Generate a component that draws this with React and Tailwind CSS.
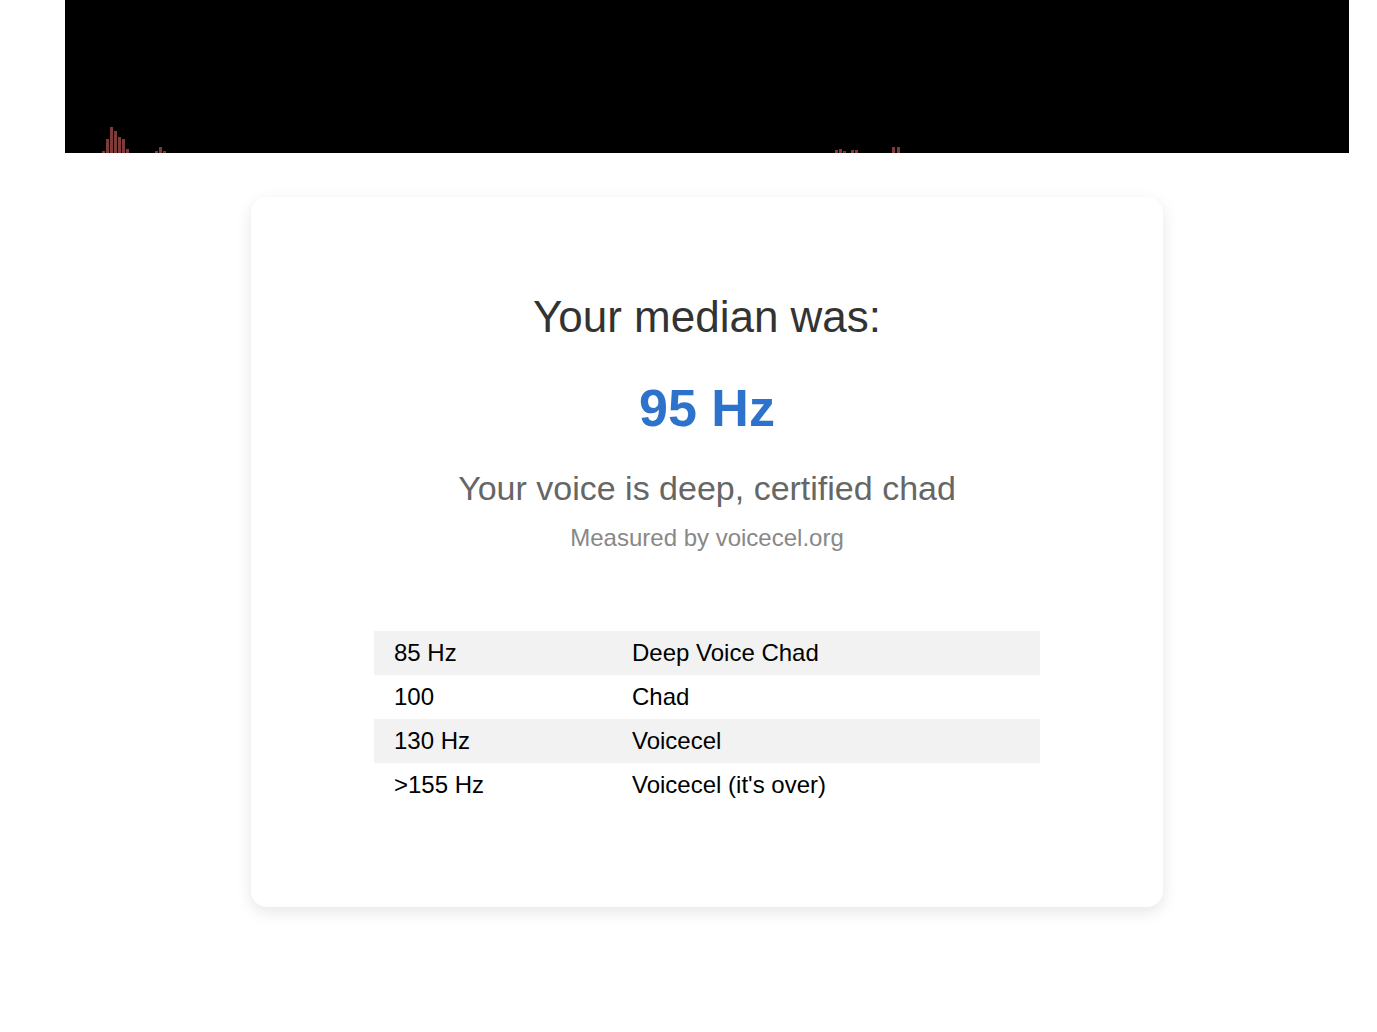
import React from "react";

const bars = [
    { x: 102, h: 2 },
    { x: 106, h: 14 },
    { x: 110, h: 26 },
    { x: 114, h: 22 },
    { x: 118, h: 16 },
    { x: 122, h: 14 },
    { x: 126, h: 4 },
    { x: 155, h: 2 },
    { x: 159, h: 6 },
    { x: 163, h: 2 },
    { x: 835, h: 3 },
    { x: 839, h: 4 },
    { x: 843, h: 2 },
    { x: 851, h: 3 },
    { x: 855, h: 3 },
    { x: 892, h: 6 },
    { x: 897, h: 6 },
];

const rows = [
    ["85 Hz", "Deep Voice Chad"],
    ["100", "Chad"],
    ["130 Hz", "Voicecel"],
    [">155 Hz", "Voicecel (it's over)"],
];

const App = () => {
    return (
        <div className="min-h-[1032px] bg-white" style={{ fontFamily: '"Liberation Sans", Arial, sans-serif' }}>
            {/* spectrum canvas */}
            <div className="ml-[65px] w-[1284px] h-[153px] bg-black">
                <svg width="1284" height="153" viewBox="0 0 1284 153">
                    {bars.map((b, i) => (
                        <rect key={i} x={b.x - 65} y={153 - b.h} width="3" height={b.h} fill="#7e3a38" />
                    ))}
                </svg>
            </div>

            <div className="ml-[251px] mt-[44px] w-[912px] rounded-2xl bg-white shadow-[0_5px_16px_rgba(0,0,0,0.1)] pt-[98px] pb-[100px] flex flex-col items-center">
                <h1 className="text-[44px] leading-none text-[#333]">Your median was:</h1>
                <div className="mt-[43px] text-[52px] leading-none font-bold text-[#2d72cb]">95 Hz</div>
                <p className="mt-[37px] text-[34px] leading-none text-[#666]">Your voice is deep, certified chad</p>
                <p className="mt-[21px] text-[24px] leading-none text-[#888]">Measured by voicecel.org</p>

                <div className="mt-[81px] w-[666px] text-[24px] text-black">
                    {rows.map((r, i) => (
                        <div key={i} className={"grid grid-cols-[239px_1fr] h-[44px] items-center " + (i % 2 === 0 ? "bg-[#f2f2f2]" : "")}>
                            <span className="pl-[20px]">{r[0]}</span>
                            <span className="pl-[19px]">{r[1]}</span>
                        </div>
                    ))}
                </div>
            </div>
        </div>
    );
};

export default App;
